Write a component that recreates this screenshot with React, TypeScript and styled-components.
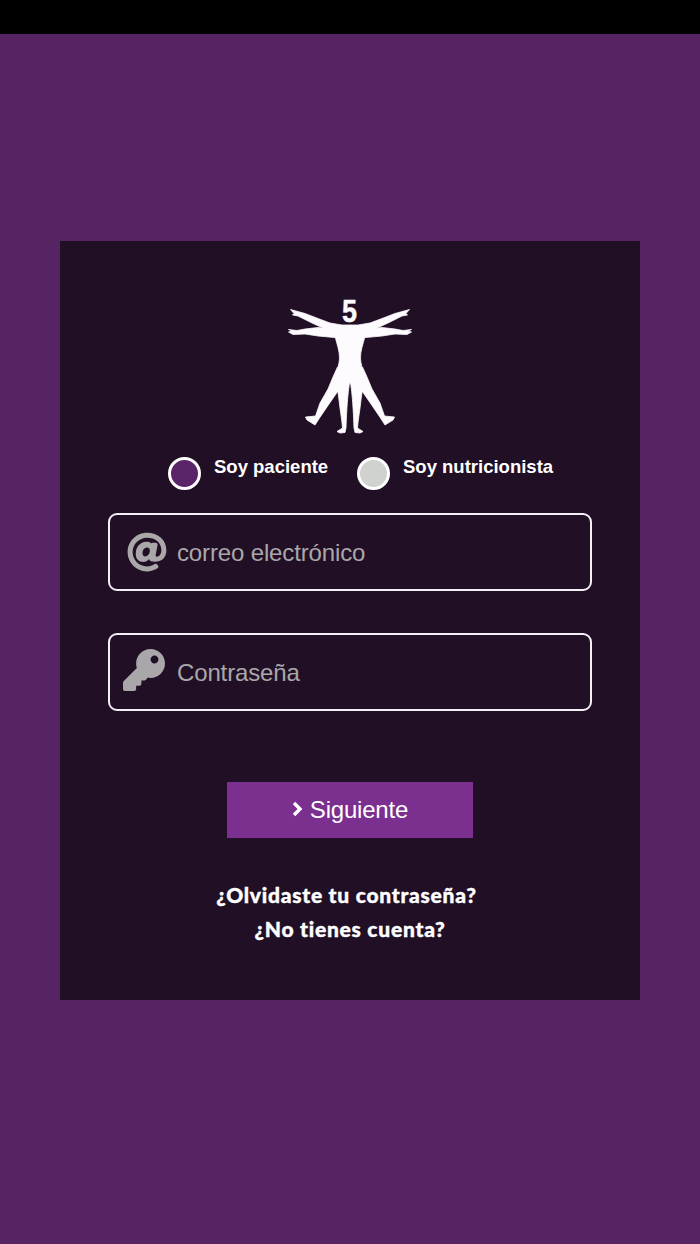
import React from "react";
import styled, { createGlobalStyle } from "styled-components";
import { FaAt, FaKey } from "react-icons/fa";

const Global = createGlobalStyle`
  html, body { margin: 0; padding: 0; background: #572463; }
  * { box-sizing: border-box; }
`;

const Page = styled.div`
  width: 700px;
  height: 1244px;
  background: #572463;
  overflow: hidden;
  font-family: "Liberation Sans", Arial, sans-serif;
`;

const StatusBar = styled.div`
  height: 34px;
  background: #000;
`;

const Card = styled.main`
  width: 580px;
  height: 759px;
  margin: 207px auto 0;
  padding: 44px 48px 0;
  background: #210f26;
  display: flex;
  flex-direction: column;
  align-items: stretch;
`;

const Logo = styled.svg`
  width: 160px;
  height: 160px;
  align-self: center;
  display: block;
`;

const Choices = styled.div`
  display: flex;
  margin: 12px 0 0 60px;
  height: 56px;
`;

const Choice = styled.label<{ $width: number }>`
  display: flex;
  width: ${(p) => p.$width}px;
  gap: 13px;
  align-items: flex-start;
`;

const Radio = styled.span<{ $fill: string }>`
  width: 33px;
  height: 33px;
  border-radius: 50%;
  border: 3.5px solid #fff;
  background: ${(p) => p.$fill};
  flex: none;
`;

const ChoiceText = styled.span`
  color: #fff;
  font-size: 18.5px;
  font-weight: 700;
  line-height: 20px;
`;

const Field = styled.div<{ $gap: number }>`
  height: 78px;
  margin-bottom: ${(p) => p.$gap}px;
  border: 2px solid #f4eff5;
  border-radius: 9px;
  display: flex;
  align-items: center;
`;

const IconSlot = styled.span<{ $left: number; $bottom: number }>`
  width: 67px;
  flex: none;
  display: flex;
  justify-content: center;
  color: #aaa7aa;
  padding-left: ${(p) => p.$left}px;
  padding-bottom: ${(p) => p.$bottom}px;
`;

const Placeholder = styled.span`
  color: #aaa7aa;
  font-size: 24px;
  letter-spacing: -0.14px;
  margin-top: 2px;
`;

const Submit = styled.button`
  width: 246px;
  height: 56px;
  align-self: center;
  border: 0;
  padding: 0;
  background: #7b2f8f;
  color: #fff;
  font-family: inherit;
  font-size: 24px;
  letter-spacing: -0.2px;
  display: flex;
  align-items: center;
  justify-content: center;
  gap: 7px;
`;

const Chevron = styled.svg`
  width: 11px;
  height: 16px;
  margin-top: -3px;
  display: block;
`;

const Links = styled.div`
  margin-top: 42px;
  display: flex;
  flex-direction: column;
  align-items: center;
  gap: 5px;
`;

const LinkText = styled.a<{ $inset: number }>`
  color: #fff;
  font-family: Lato, "Liberation Sans", sans-serif;
  font-weight: 900;
  font-size: 21px;
  line-height: 29px;
  letter-spacing: 0.75px;
  -webkit-text-stroke: 0.4px #fff;
  padding-right: ${(p) => p.$inset}px;
`;

function Figure() {
  const limbs = (
    <>
      <path d="M290.5 309.5 L305 313.5 L318 318.5 L330 323 L342 325 L342 340 L333 332 L323 328 L312 323 L298 316 L292.5 315 L294 313.5 Z" />
      <path d="M288.5 329.5 L297 330.5 L305 329 L318 327.5 L326 328.5 L340 335 L340 338 L318 336 L305 334 L293 334.5 L288.5 332 L292 331 Z" />
      <path d="M337.5 367 L333 377 L328 389 L320 403 L315.5 416 L305.5 417 L307 420 L315 425 L319.5 418 L329 404 L338 391 Z" />
      <path d="M335 336 C337 345 339.5 350 339.5 358 C339.5 364 337 368 336.5 375 C336.5 384 338 392 339 400 C340 410 342 420 342.5 428 L337 431.5 L340 433 L345 432.5 L346 428 C346.5 415 347 405 348 395 C348.5 390 349 386 349.5 383 L350 383 L350 325 L342 325 Z" />
    </>
  );
  return (
    <Logo viewBox="270 285 160 160" aria-label="logo">
      <g fill="#fdfbfd" stroke="#fdfbfd" strokeWidth="0.8" strokeLinejoin="round">
        {limbs}
        <g transform="translate(700 0) scale(-1 1)">{limbs}</g>
        <text x="349.5" y="322" textAnchor="middle" fontFamily="'Liberation Sans', sans-serif" fontWeight="700" fontSize="32" textLength="15" lengthAdjust="spacingAndGlyphs" strokeWidth="0.5">5</text>
      </g>
    </Logo>
  );
}

export default function App() {
  return (
    <Page>
      <Global />
      <StatusBar />
      <Card>
        <Figure />
        <Choices>
          <Choice $width={189}>
            <Radio $fill="#5a2468" />
            <ChoiceText>Soy paciente</ChoiceText>
          </Choice>
          <Choice $width={220}>
            <Radio $fill="#cfd2cf" />
            <ChoiceText>Soy nutricionista</ChoiceText>
          </Choice>
        </Choices>
        <Field $gap={42}>
          <IconSlot $left={6} $bottom={0}><FaAt size={40} /></IconSlot>
          <Placeholder>correo electrónico</Placeholder>
        </Field>
        <Field $gap={71}>
          <IconSlot $left={0} $bottom={4}><FaKey size={42} /></IconSlot>
          <Placeholder>Contraseña</Placeholder>
        </Field>
        <Submit>
          <Chevron viewBox="0 0 11 16">
            <path d="M2 2 L8 8 L2 14" fill="none" stroke="#fff" strokeWidth="3.4" />
          </Chevron>
          Siguiente
        </Submit>
        <Links>
          <LinkText $inset={7}>¿Olvidaste tu contraseña?</LinkText>
          <LinkText $inset={0}>¿No tienes cuenta?</LinkText>
        </Links>
      </Card>
    </Page>
  );
}
